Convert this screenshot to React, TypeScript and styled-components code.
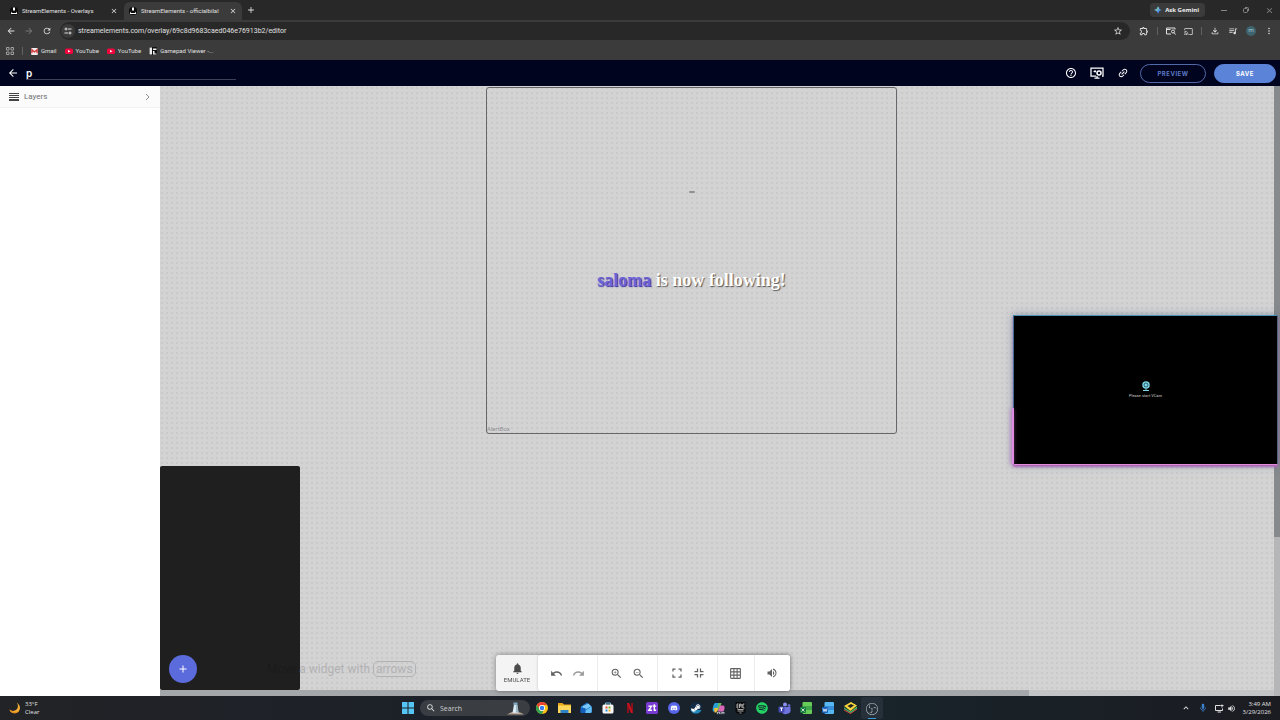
import React from 'react';
import styled, { createGlobalStyle } from 'styled-components';
import {
  MdAdd, MdArrowBack, MdArrowForward, MdCast, MdClose, MdExpandLess,
  MdGridOn, MdHelpOutline, MdLink, MdMic, MdMoreVert, MdNotifications,
  MdOutlineFileDownload, MdOutlineExtension, MdQueueMusic, MdRedo, MdRefresh,
  MdStarBorder, MdUndo, MdVolumeUp, MdZoomIn, MdZoomOut, MdSearch,
} from 'react-icons/md';
import { FaDiscord, FaSpotify, FaSteamSymbol } from 'react-icons/fa';
import { SiObsstudio } from 'react-icons/si';

const ui = '"Open Sans", "Noto Sans", sans-serif';
const roboto = 'Roboto, "Liberation Sans", sans-serif';

const GlobalStyle = createGlobalStyle`
  *, *::before, *::after { box-sizing: border-box; }
  body { margin: 0; font-family: ${ui}; font-size: 7px; color: #e0e0e0; }
  button, input { font: inherit; color: inherit; background: none; border: 0; padding: 0; margin: 0; outline: 0; }
  button { display: inline-flex; align-items: center; justify-content: center; cursor: pointer; }
  a { color: inherit; text-decoration: none; }
  svg { display: block; flex: none; }
`;

const Page = styled.div`
  display: flex;
  flex-direction: column;
  min-height: 100vh;
`;

const TabStrip = styled.header`
  display: flex;
  align-items: center;
  height: 20px;
  padding-right: 6px;
  background: #282828;
`;

const Tab = styled.div<{ $active?: boolean }>`
  display: flex;
  align-items: center;
  gap: 4px;
  height: 18px;
  width: ${(p) => (p.$active ? 118 : 124)}px;
  align-self: flex-end;
  padding: 0 ${(p) => (p.$active ? 5 : 6)}px 0 ${(p) => (p.$active ? 5 : 10)}px;
  border-radius: 6px 6px 0 0;
  background: ${(p) => (p.$active ? '#3b3b3b' : 'transparent')};
`;

const TabTitle = styled.span`
  flex: 1;
  overflow: hidden;
  white-space: nowrap;
  font-family: ${roboto};
  font-size: 6px;
  line-height: 10px;
`;

const Spacer = styled.div`
  flex: 1;
`;

const NewTab = styled.button`
  width: 18px;
  height: 18px;
`;

const GeminiButton = styled.button`
  gap: 3px;
  height: 14px;
  padding: 0 6px 0 4px;
  margin-right: 16px;
  border-radius: 4px;
  background: #3b3b3b;
  font-size: 6px;
  font-weight: 700;
  color: #f0f0f0;
`;

const WindowButtons = styled.div`
  display: flex;
  gap: 16px;
  color: #858585;
`;

const BrowserBar = styled.div`
  display: flex;
  align-items: center;
  gap: 8px;
  height: 22px;
  padding: 0 6px;
  background: #3b3b3b;
`;

const NavButtons = styled.div`
  display: flex;
  gap: 8px;
`;

const Address = styled.label`
  display: flex;
  flex: 1;
  align-items: center;
  gap: 3px;
  height: 18px;
  margin-right: 1px;
  padding: 0 7px 0 1px;
  border-radius: 9px;
  background: #282828;
`;

const SiteInfo = styled.span`
  display: flex;
  align-items: center;
  justify-content: center;
  width: 14px;
  height: 14px;
  border-radius: 7px;
  background: #3b3b3b;
`;

const UrlText = styled.input`
  flex: 1;
  min-width: 0;
  height: 12px;
  font-family: ${roboto};
`;

const Divider = styled.span`
  width: 1px;
  height: 8px;
  background: #606060;
`;

const Avatar = styled.span`
  width: 10px;
  height: 10px;
  border-radius: 5px;
  background: #3e6470;
  color: #b4d4dc;
  font-size: 6px;
  line-height: 9px;
  text-align: center;
`;

const Bookmarks = styled.nav`
  display: flex;
  align-items: center;
  gap: 8px;
  height: 18px;
  padding: 0 6px;
  background: #3b3b3b;
`;

const Bookmark = styled.a`
  display: flex;
  align-items: center;
  gap: 3px;
  font-family: ${roboto};
  font-size: 6px;
  line-height: 10px;
`;

const AppHeader = styled.header`
  display: flex;
  align-items: center;
  gap: 11px;
  height: 26px;
  padding: 0 4px 0 7px;
  background: #01041f;
  color: #ffffff;
`;

const NameField = styled.input`
  width: 210px;
  height: 14px;
  margin-left: -4px;
  border-bottom: 1px solid #3d4057;
  font-family: Inter, sans-serif;
  font-size: 10px;
  font-weight: 600;
`;

const HeaderIcons = styled.div`
  display: flex;
  gap: 13px;
`;

const HeaderActions = styled.div`
  display: flex;
  gap: 8px;
`;

const Pill = styled.button<{ $filled?: boolean }>`
  width: ${(p) => (p.$filled ? 62 : 66)}px;
  height: 19px;
  border: 1px solid ${(p) => (p.$filled ? '#5b84d8' : '#5269a8')};
  border-radius: 10px;
  background: ${(p) => (p.$filled ? '#5b84d8' : 'transparent')};
  color: ${(p) => (p.$filled ? '#ffffff' : '#5c78c4')};
  font-family: Inter, sans-serif;
  font-size: 6px;
  font-weight: 700;
  letter-spacing: 0.5px;
`;

const Workspace = styled.div`
  display: flex;
  flex: 1;
`;

const Sidebar = styled.aside`
  width: 160px;
  background: #ffffff;
`;

const LayersButton = styled.button`
  width: 100%;
  height: 22px;
  gap: 5px;
  padding: 0 7px 0 9px;
  background: #fbfbfb;
  border-bottom: 1px solid #f2f2f2;
  font-family: ${roboto};
  font-size: 8px;
  color: #707070;
`;

const Stage = styled.div`
  display: flex;
  flex: 1;
  flex-direction: column;
  min-width: 0;
`;

const Canvas = styled.main`
  position: relative;
  flex: 1;
  background-color: #d3d3d4;
  background-image: radial-gradient(circle at 2px 2px, #c9c9ca 0, #c9c9ca 1px, transparent 1px);
  background-size: 5px 5px;
`;

const HorizontalTrack = styled.div`
  height: 6px;
  background: #c2c4c5;
`;

const HorizontalThumb = styled.div`
  width: 78%;
  height: 6px;
  background: #a4a8aa;
`;

const VerticalTrack = styled.div`
  width: 6px;
  background: #b4b6b8;
`;

const VerticalThumb = styled.div`
  width: 6px;
  height: 74%;
  background: #868a8c;
`;

const AlertWidget = styled.section`
  position: absolute;
  top: 1px;
  left: 326px;
  width: 411px;
  height: 347px;
  border: 1px solid #66676a;
  border-radius: 3px;
`;

const AlertMessage = styled.p`
  position: absolute;
  top: 180px;
  left: 0;
  width: 100%;
  margin: 0;
  text-align: center;
  white-space: nowrap;
  font: 900 18px/24px "Liberation Serif", serif;
  color: #ffffff;
  text-shadow: 1px 1px 1px #555555;
`;

const Follower = styled.span`
  color: #6f63d8;
  text-shadow: 1px 1px 1px #37309c;
`;

const AlertMark = styled.div`
  position: absolute;
  top: 103px;
  left: 202px;
  width: 6px;
  height: 2px;
  background: #909092;
  border-radius: 1px;
`;

const WidgetLabel = styled.span`
  position: absolute;
  left: 0;
  bottom: 0;
  font-family: ${roboto};
  font-size: 6px;
  line-height: 8px;
  color: #909093;
`;

const DarkWidget = styled.section`
  position: absolute;
  left: 0;
  bottom: 0;
  width: 140px;
  height: 224px;
  border-radius: 2px;
  background: #1f1f1f;
`;

const AddButton = styled.button`
  position: absolute;
  left: 9px;
  bottom: 7px;
  width: 28px;
  height: 28px;
  border-radius: 14px;
  background: #5c6bdc;
  color: #ffffff;
`;

const Hint = styled.p`
  position: absolute;
  left: 107px;
  bottom: 13px;
  margin: 0;
  font-family: ${roboto};
  font-size: 12px;
  line-height: 16px;
  color: #b2b2b3;
  white-space: nowrap;
`;

const HintFade = styled.span`
  color: #1b1b1b;
`;

const Key = styled.kbd`
  padding: 0 2px;
  border: 1px solid #b2b2b3;
  border-radius: 5px;
  font: inherit;
`;

const CameraWidget = styled.section`
  position: absolute;
  top: 229px;
  right: -4px;
  z-index: 2;
  display: flex;
  flex-direction: column;
  align-items: center;
  justify-content: center;
  gap: 2px;
  width: 265px;
  height: 150px;
  border: 1px solid;
  border-color: #4b91ba #52627e #e58ada #3f6e98;
  background: #000000;
  box-shadow: 0 0 8px rgba(70, 90, 120, 0.5), 0 2px 2px #c26bc6;
  font-family: ${roboto};
  font-size: 4px;
  line-height: 6px;
  color: #c8c8c8;
`;

const CameraGlow = styled.div`
  position: absolute;
  left: -2px;
  bottom: 0;
  width: 2px;
  height: 56px;
  background: #dc8ae0;
  box-shadow: -1px 1px 4px #b860c8;
`;

const Dock = styled.div`
  position: fixed;
  left: 50%;
  bottom: 29px;
  z-index: 3;
  display: flex;
  width: 294px;
  height: 36px;
  margin-left: -144px;
  border-radius: 3px;
  background: #f4f4f4;
  box-shadow: 0 0 5px rgba(0, 0, 0, 0.4);
`;

const Emulate = styled.button`
  flex-direction: column;
  gap: 1px;
  width: 42px;
  font-family: ${roboto};
  font-size: 6px;
  line-height: 8px;
  color: #4b4b4b;
`;

const ToolPanel = styled.div`
  display: flex;
  flex: 1;
  border-radius: 3px;
  background: #ffffff;
  box-shadow: 0 0 3px rgba(0, 0, 0, 0.2);
`;

const ToolGroup = styled.div<{ $single?: boolean }>`
  display: flex;
  flex: ${(p) => (p.$single ? 36 : 60)} 1 0;
  align-items: center;
  justify-content: center;
  gap: 10px;
  & + & { border-left: 1px solid #ececec; }
`;

const Tool = styled.button<{ $muted?: boolean }>`
  width: 12px;
  height: 12px;
  color: ${(p) => (p.$muted ? '#9a9a9a' : '#626262')};
`;

const Taskbar = styled.footer`
  display: grid;
  grid-template-columns: 1fr auto 1fr;
  align-items: center;
  height: 24px;
  padding: 0 9px;
  background: linear-gradient(90deg, #222326, #1b2029 40%, #18242b 65%, #1b1c22);
`;

const Weather = styled.div`
  display: flex;
  align-items: center;
  gap: 4px;
  font-size: 6px;
  line-height: 8px;
`;

const TaskItems = styled.div`
  display: flex;
  align-items: center;
  height: 24px;
`;

const Task = styled.button<{ $active?: boolean }>`
  width: 22px;
  height: 22px;
  border-radius: 2px;
  background: ${(p) => (p.$active ? '#25303a' : 'transparent')};
`;

const ActiveTask = styled(Task)`
  flex-direction: column;
  justify-content: flex-end;
  gap: 3px;
  &::after {
    content: '';
    width: 8px;
    height: 1px;
    background: #3b98d0;
  }
`;

const SearchBox = styled.label`
  display: flex;
  align-items: center;
  gap: 4px;
  width: 110px;
  height: 16px;
  margin: 0 1px;
  padding: 0 6px;
  border-radius: 8px;
  background: #3a3d42;
`;

const SearchInput = styled.input`
  flex: 1;
  min-width: 0;
  height: 10px;
  &::placeholder { color: #d0d0d0; opacity: 1; }
`;

const Tray = styled.div`
  display: flex;
  align-items: center;
  justify-content: flex-end;
  gap: 7px;
`;

const TrayPair = styled.div`
  display: flex;
  gap: 3px;
`;

const Clock = styled.time`
  font-size: 6px;
  line-height: 8px;
  text-align: right;
`;

const Favicon = () => (
  <svg width="8" height="8" viewBox="0 0 16 16">
    <rect width="16" height="16" rx="7" fill="#0c0c0c" />
    <path d="M6 1h4v6H6zM2 9l2 3h8l2-3v5H2z" fill="#fff" />
  </svg>
);

const SiteControls = () => (
  <svg width="8" height="8" viewBox="0 0 16 16" fill="none" stroke="currentColor" strokeWidth="2">
    <path d="M8 4h7M1 12h7" /><circle cx="4" cy="4" r="2" /><circle cx="12" cy="12" r="2" />
  </svg>
);

const AppsGrid = () => (
  <svg width="8" height="8" viewBox="0 0 16 16" fill="none" stroke="#a0a0a0" strokeWidth="2">
    <path d="M1 1h5v5H1zM10 1h5v5h-5zM1 10h5v5H1zM10 10h5v5h-5z" />
  </svg>
);

const YouTube = () => (
  <svg width="8" height="8" viewBox="0 0 16 16">
    <rect y="3" width="16" height="11" rx="3" fill="#f0063c" />
    <path d="M6 6l5 2.500-5 2.500z" fill="#fff" />
  </svg>
);

const Gmail = () => (
  <svg width="7" height="7" viewBox="0 0 16 16">
    <rect width="16" height="16" rx="3" fill="#f1eded" />
    <path d="M2 12V4l6 5 6-5v8" fill="none" stroke="#cf3434" strokeWidth="3" />
  </svg>
);

const Gamepad = () => (
  <svg width="8" height="8" viewBox="0 0 16 16">
    <rect width="16" height="16" rx="1" fill="#111" />
    <path d="M1 1h5v14H1zM8 3h7v3H8zM8 8h3v5h4v2H8z" fill="#eee" />
  </svg>
);

const Sparkle = () => (
  <svg width="8" height="8" viewBox="0 0 16 16">
    <path d="M8 0c1 5 3 7 8 8-5 1-7 3-8 8-1-5-3-7-8-8 5-1 7-3 8-8" fill="#4f91ed" />
    <path d="M8 0c-1 5-3 7-8 8 3 .5 5 1.500 6 3l5-7C9 3 8 2 8 0" fill="#78bdb5" />
  </svg>
);

const LensPanel = () => (
  <svg width="10" height="8" viewBox="0 0 20 16" fill="none" stroke="currentColor" strokeWidth="2">
    <path d="M10 14H1V2h17v3M1 5h8" /><circle cx="14" cy="9" r="3" /><path d="M16 11l3 4" />
  </svg>
);

const ScreenSettings = () => (
  <svg width="14" height="12" viewBox="0 0 28 24" fill="none" stroke="currentColor">
    <path d="M12 18H2V2h24v16h-2" strokeWidth="2.500" />
    <path d="M9 22h10M14 18v4" strokeWidth="2.500" />
    <path d="M7 9h5m-2-3v5" strokeWidth="2" />
    <circle cx="18" cy="12" r="4" strokeWidth="3" />
  </svg>
);

const Bars = () => (
  <svg width="10" height="8" viewBox="0 0 10 8" fill="#444">
    <path d="M0 0h10v1H0zM0 2h10v1H0zM0 4h10v1H0zM0 6h10v2H0z" />
  </svg>
);

const Chevron = () => (
  <svg width="10" height="10" viewBox="0 0 10 10" fill="none" stroke="#909090">
    <path d="M3 2l3 3-3 3" />
  </svg>
);

const Expand = ({ inward }: { inward?: boolean }) => (
  <svg width="10" height="10" viewBox="0 0 20 20" fill="none" stroke="currentColor" strokeWidth="2.500">
    {inward
      ? <path d="M1 7h6V1M13 1v6h6M19 13h-6v6M7 19v-6H1" />
      : <path d="M2 7V2h5M13 2h5v5M18 13v5h-5M7 18H2v-5" />}
  </svg>
);

const Moon = () => (
  <svg width="12" height="12" viewBox="0 0 24 24">
    <path d="M15 1a9 9 0 0 1-14 14c2 11 20 10 21-3 0-5-3-9-7-11" fill="#f2ad35" />
    <path d="M1 15c3 10 16 9 20 2-6 4-14 4-20-2" fill="#e58b20" />
  </svg>
);

const Windows = () => (
  <svg width="12" height="12" viewBox="0 0 24 24" fill="#55c5f3">
    <path d="M0 0h11v11H0zM13 0h11v11H13zM0 13h11v11H0zM13 13h11v11H13z" />
  </svg>
);

const Lighthouse = () => (
  <svg width="17" height="13" viewBox="0 0 34 26">
    <path d="M0 25c8-6 24-7 34 0z" fill="#ad9a8a" /><path d="M7 22l10-3 11 4z" fill="#e4d8ce" />
    <path d="M14 5h6l3 16H11z" fill="#d9eaf2" /><path d="M13 1h8v5h-8z" fill="#83a9c0" />
    <path d="M18 6h3l2 15h-5z" fill="#9db7c6" />
  </svg>
);

const Chrome = () => (
  <svg width="12" height="12" viewBox="0 0 24 24">
    <circle cx="12" cy="12" r="12" fill="#fbc116" />
    <path d="M1.600 6A12 12 0 0 1 22.400 6H12a6 6 0 0 0-5.200 9z" fill="#e94335" />
    <path d="M1.600 6l5.200 9A6 6 0 0 0 15 17.200L12 24A12 12 0 0 1 1.600 6" fill="#2ea14f" />
    <circle cx="12" cy="12" r="6" fill="#fff" /><circle cx="12" cy="12" r="4.500" fill="#3b7ded" />
  </svg>
);

const Folder = () => (
  <svg width="13" height="12" viewBox="0 0 26 24">
    <path d="M0 2h9l3 3h14v17H0z" fill="#e9a51a" /><path d="M0 7h26v15H0z" fill="#ffd75b" />
    <path d="M5 16h16v6H5z" fill="#2d83c7" />
  </svg>
);

const Outlook = () => (
  <svg width="12" height="12" viewBox="0 0 26 26">
    <path d="M2 10L15 1l10 8v14H4q-2 0-2-2z" fill="#1b6fc5" /><path d="M5 9L18 3l6 6-14 9z" fill="#79c8f5" />
    <path d="M2 10l12 8 11-8v11q0 3-3 3H5q-3 0-3-3z" fill="#2c91e4" /><path d="M13 18l12-8v11q0 3-3 3H8z" fill="#65bff5" />
    <rect x="1" y="13" width="11" height="11" rx="2" fill="#155fbc" />
  </svg>
);

const Store = () => (
  <svg width="12" height="12" viewBox="0 0 24 24">
    <path d="M7 6V2h10v4" fill="none" stroke="#79b9df" strokeWidth="2" /><rect x="1" y="5" width="22" height="18" rx="3" fill="#f5f5f5" />
    <path d="M7 9h4v4H7z" fill="#e95032" /><path d="M13 9h4v4h-4z" fill="#76b82a" />
    <path d="M7 15h4v4H7z" fill="#2699da" /><path d="M13 15h4v4h-4z" fill="#f2b51d" />
  </svg>
);

const Netflix = () => (
  <svg width="6" height="10" viewBox="0 0 12 20" fill="none" strokeWidth="4">
    <path d="M2 0v20M10 0v20" stroke="#8c1019" /><path d="M2 0l8 20" stroke="#c91420" />
  </svg>
);

const Zt = () => (
  <svg width="12" height="12" viewBox="0 0 26 26" fill="none" stroke="#fff" strokeWidth="3">
    <rect width="26" height="26" rx="4" fill="#783bd1" stroke="none" />
    <path d="M5 9h7l-6 9h7M18 5v13h4M15 9h7" />
  </svg>
);

const Discord = () => (
  <svg width="12" height="12" viewBox="0 0 26 26">
    <circle cx="13" cy="13" r="13" fill="#5965e9" /><FaDiscord x="5" y="5" size="16" color="#fff" />
  </svg>
);

const Steam = () => (
  <svg width="12" height="12" viewBox="0 0 24 24">
    <circle cx="12" cy="12" r="12" fill="#102a48" /><path d="M1 16a12 12 0 0 0 22 0" fill="#2487ba" />
    <FaSteamSymbol x="1" y="2" size="21" color="#fff" />
  </svg>
);

const Copilot = () => (
  <svg width="13" height="13" viewBox="0 0 26 26">
    <path d="M6 2h9l-5 17H3c-4 0 0-17 3-17" fill="#279ed8" /><path d="M13 2h6l-4 13-7 4z" fill="#62bd5b" />
    <path d="M16 7h6c6 0 2 14-2 14h-9z" fill="#d967b8" /><path d="M4 12h8l-2 9H5z" fill="#f3bf37" />
    <path d="M9 19h16v6H9z" fill="#343b4b" /><path d="M11 24v-4l2 2 2-2v4m3 0v-3m2 3v-4l2 2 2-2v4" stroke="#fff" fill="none" />
  </svg>
);

const Epic = () => (
  <svg width="11" height="13" viewBox="0 0 22 26">
    <path d="M1 0h20v21l-10 5-10-5z" fill="#08090b" />
    <path d="M7 4H4v8h3M4 8h3M9 12V4h3v4H9M14 4v8M19 4h-3v8h3M5 15h12M5 18h12M9 22h4" fill="none" stroke="#ddd" strokeWidth="1.500" />
  </svg>
);

const Teams = () => (
  <svg width="13" height="13" viewBox="0 0 26 26">
    <circle cx="14" cy="5" r="4" fill="#8b8ff0" /><circle cx="22" cy="7" r="3" fill="#6265c8" />
    <path d="M8 10h17v8c0 4-4 5-5 5-8 4-12-1-12-5z" fill="#6f73dc" />
    <rect x="1" y="9" width="12" height="12" rx="2" fill="#464bb2" /><path d="M4 12h6M7 12v6" stroke="#fff" strokeWidth="2" />
  </svg>
);

const OfficeDoc = ({ light, dark, excel }: { light: string; dark: string; excel?: boolean }) => (
  <svg width="12" height="12" viewBox="0 0 24 24">
    <rect x="5" width="19" height="24" rx="2" fill={light} />
    <path d="M5 8h19v8H5z" fill={dark} opacity=".45" />
    <rect y="10" width="12" height="12" rx="2" fill={dark} />
    <path d={excel ? 'M3 13l6 6m0-6l-6 6' : 'M2 13l2 6 2-5 2 5 2-6'} fill="none" stroke="#fff" strokeWidth="1.500" />
  </svg>
);

const BlueStacks = () => (
  <svg width="13" height="12" viewBox="0 0 26 24">
    <path d="M0 15l13 7 13-9v2l-13 9-13-7z" fill="#e63e39" /><path d="M0 11l13 8 13-10v4l-13 9-13-8z" fill="#47b964" />
    <path d="M0 8L14 0l12 7-13 11z" fill="#f5d53b" /><path d="M7 8l7-4 6 3-7 5z" fill="#222" />
  </svg>
);

const Webcam = () => (
  <svg width="8" height="10" viewBox="0 0 16 20">
    <circle cx="8" cy="8" r="7.500" fill="#7bd6e8" /><circle cx="8" cy="8" r="4" fill="none" stroke="#123b49" strokeWidth="1.500" />
    <path d="M7 15h2v3h5v2H2v-2h5z" fill="#7bd6e8" />
  </svg>
);

const NetworkScreen = () => (
  <svg width="9" height="9" viewBox="0 0 18 18" fill="none" stroke="currentColor" strokeWidth="2">
    <path d="M11 3H1v10h14V9M5 16h7M14 1v6M11 3h6" />
  </svg>
);

const Restore = () => (
  <svg width="6" height="6" viewBox="0 0 12 12" fill="none" stroke="currentColor" strokeWidth="2">
    <rect x="1" y="3" width="8" height="8" rx="2" /><path d="M4 1h5q2 0 2 2v5" />
  </svg>
);

const tasks: [string, React.ReactNode][] = [
  ['Chrome', <Chrome />],
  ['File Explorer', <Folder />],
  ['Outlook', <Outlook />],
  ['Microsoft Store', <Store />],
  ['Netflix', <Netflix />],
  ['ZT', <Zt />],
  ['Discord', <Discord />],
  ['Steam', <Steam />],
  ['Copilot', <Copilot />],
  ['Epic Games', <Epic />],
  ['Spotify', <FaSpotify size={12} color="#23d365" />],
  ['Teams', <Teams />],
  ['Excel', <OfficeDoc light="#66cc57" dark="#16793e" excel />],
  ['Word', <OfficeDoc light="#56b7f3" dark="#1760bd" />],
  ['BlueStacks', <BlueStacks />],
];

const LinkIcon = styled(MdLink)`
  transform: rotate(-45deg);
`;

export default function App() {
  return (
    <Page>
      <GlobalStyle />
      <TabStrip>
        <Tab>
          <Favicon />
          <TabTitle>StreamElements - Overlays</TabTitle>
          <button aria-label="Close tab"><MdClose size={8} /></button>
        </Tab>
        <Tab $active>
          <Favicon />
          <TabTitle>StreamElements - officialbilal</TabTitle>
          <button aria-label="Close tab"><MdClose size={8} /></button>
        </Tab>
        <NewTab aria-label="New tab"><MdAdd size={10} /></NewTab>
        <Spacer />
        <GeminiButton><Sparkle />Ask Gemini</GeminiButton>
        <WindowButtons>
          <button aria-label="Minimize"><svg width="6" height="8" viewBox="0 0 6 8"><path d="M0 4.500h6" stroke="currentColor" /></svg></button>
          <button aria-label="Restore"><Restore /></button>
          <button aria-label="Close"><MdClose size={9} /></button>
        </WindowButtons>
      </TabStrip>
      <BrowserBar>
        <NavButtons>
          <button aria-label="Back"><MdArrowBack size={10} /></button>
          <button aria-label="Forward"><MdArrowForward size={10} color="#777" /></button>
          <button aria-label="Reload"><MdRefresh size={10} /></button>
        </NavButtons>
        <Address>
          <SiteInfo><SiteControls /></SiteInfo>
          <UrlText aria-label="Address" defaultValue="streamelements.com/overlay/69c8d9683caed046e76913b2/editor" />
          <MdStarBorder size={10} />
        </Address>
        <button aria-label="Extensions"><MdOutlineExtension size={10} /></button>
        <Divider />
        <button aria-label="Search with Lens"><LensPanel /></button>
        <button aria-label="Cast"><MdCast size={9} /></button>
        <Divider />
        <button aria-label="Downloads"><MdOutlineFileDownload size={10} /></button>
        <button aria-label="Media"><MdQueueMusic size={10} /></button>
        <Avatar>m</Avatar>
        <button aria-label="Menu"><MdMoreVert size={10} /></button>
      </BrowserBar>
      <Bookmarks>
        <AppsGrid />
        <Divider />
        <Bookmark href="#gmail"><Gmail />Gmail</Bookmark>
        <Bookmark href="#youtube"><YouTube />YouTube</Bookmark>
        <Bookmark href="#youtube-2"><YouTube />YouTube</Bookmark>
        <Bookmark href="#gamepad"><Gamepad />Gamepad Viewer -...</Bookmark>
      </Bookmarks>
      <AppHeader>
        <button aria-label="Go back"><MdArrowBack size={12} /></button>
        <NameField aria-label="Overlay name" defaultValue="p" />
        <Spacer />
        <HeaderIcons>
          <button aria-label="Help"><MdHelpOutline size={12} /></button>
          <button aria-label="Screen settings"><ScreenSettings /></button>
          <button aria-label="Copy link"><LinkIcon size={12} /></button>
        </HeaderIcons>
        <HeaderActions>
          <Pill>PREVIEW</Pill>
          <Pill $filled>SAVE</Pill>
        </HeaderActions>
      </AppHeader>
      <Workspace>
        <Sidebar>
          <LayersButton><Bars />Layers<Spacer /><Chevron /></LayersButton>
        </Sidebar>
        <Stage>
          <Canvas>
            <AlertWidget>
              <AlertMark />
              <AlertMessage><Follower>saloma</Follower> is now following!</AlertMessage>
              <WidgetLabel>AlertBox</WidgetLabel>
            </AlertWidget>
            <DarkWidget />
            <Hint><HintFade>Move </HintFade>a widget with <Key>arrows</Key></Hint>
            <AddButton aria-label="Add widget"><MdAdd size={12} /></AddButton>
            <CameraWidget><CameraGlow /><Webcam />Please start VCam</CameraWidget>
          </Canvas>
          <HorizontalTrack><HorizontalThumb /></HorizontalTrack>
        </Stage>
        <VerticalTrack><VerticalThumb /></VerticalTrack>
      </Workspace>
      <Dock>
        <Emulate><MdNotifications size={13} />EMULATE</Emulate>
        <ToolPanel>
          <ToolGroup>
            <Tool aria-label="Undo"><MdUndo size={13} /></Tool>
            <Tool aria-label="Redo" $muted><MdRedo size={13} /></Tool>
          </ToolGroup>
          <ToolGroup>
            <Tool aria-label="Zoom in"><MdZoomIn size={13} /></Tool>
            <Tool aria-label="Zoom out"><MdZoomOut size={13} /></Tool>
          </ToolGroup>
          <ToolGroup>
            <Tool aria-label="Full screen"><Expand /></Tool>
            <Tool aria-label="Fit screen"><Expand inward /></Tool>
          </ToolGroup>
          <ToolGroup $single><Tool aria-label="Grid"><MdGridOn size={13} /></Tool></ToolGroup>
          <ToolGroup $single><Tool aria-label="Volume"><MdVolumeUp size={12} /></Tool></ToolGroup>
        </ToolPanel>
      </Dock>
      <Taskbar>
        <Weather><Moon /><div>33°F<br />Clear</div></Weather>
        <TaskItems>
          <Task aria-label="Start"><Windows /></Task>
          <SearchBox><MdSearch size={10} /><SearchInput placeholder="Search" aria-label="Search" /><Lighthouse /></SearchBox>
          {tasks.map(([name, icon]) => <Task key={name} aria-label={name}>{icon}</Task>)}
          <ActiveTask aria-label="OBS Studio" $active><SiObsstudio size={12} color="#c5c8ca" /></ActiveTask>
        </TaskItems>
        <Tray>
          <MdExpandLess size={10} />
          <MdMic size={10} color="#3c83cf" />
          <TrayPair><NetworkScreen /><MdVolumeUp size={9} /></TrayPair>
          <Clock>3:49 AM<br />3/29/2026</Clock>
        </Tray>
      </Taskbar>
    </Page>
  );
}
